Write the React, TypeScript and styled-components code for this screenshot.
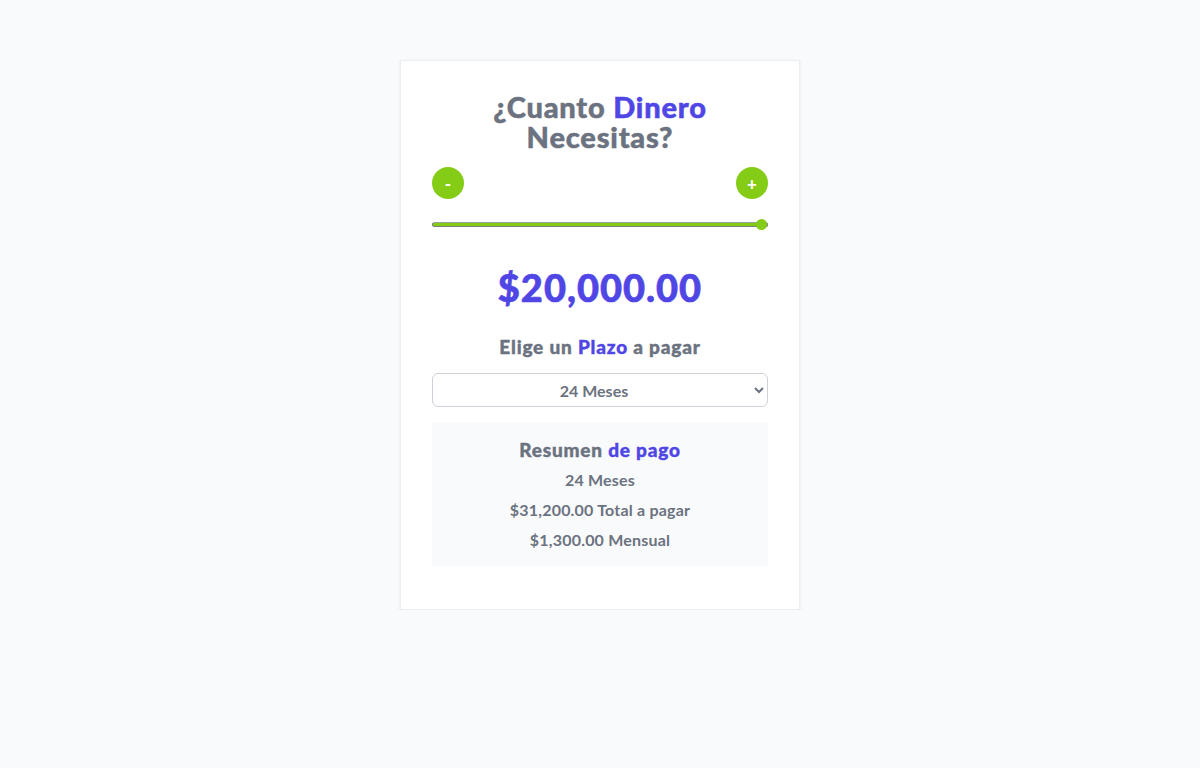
import React, { useState } from "react";
import styled, { createGlobalStyle } from "styled-components";

const Global = createGlobalStyle`
  html, body { margin: 0; padding: 0; }
  body {
    background: #f9fafb;
    font-family: Lato, "Open Sans", sans-serif;
    color: #6b7280;
  }
`;

const Page = styled.div`
  display: flex;
  justify-content: center;
  padding-top: 60px;
`;

const Card = styled.div`
  width: 400px;
  box-sizing: border-box;
  background: #fff;
  padding: 31px 31px 43px;
  border: 1px solid #eceef1;
  box-shadow: 0 1px 3px rgba(0, 0, 0, 0.08);
  display: flex;
  flex-direction: column;
`;

const Title = styled.h1`
  margin: 0;
  text-align: center;
  font-size: 29px;
  line-height: 30px;
  font-weight: 900;
  letter-spacing: 0.8px;
  -webkit-text-stroke: 0.5px currentColor;
  color: #6b7280;
`;

const Accent = styled.span`
  color: #4f46e5;
`;

const ButtonRow = styled.div`
  display: flex;
  justify-content: space-between;
  margin-top: 15px;
`;

const RoundButton = styled.button`
  width: 32px;
  height: 32px;
  border-radius: 50%;
  border: none;
  background: #84cc16;
  color: #fff;
  font-family: Lato, sans-serif;
  font-weight: 900;
  font-size: 17px;
  line-height: 1;
  padding: 0;
  display: flex;
  align-items: center;
  justify-content: center;
  cursor: pointer;
`;

const Range = styled.input`
  -webkit-appearance: none;
  appearance: none;
  width: 100%;
  margin: 20px 0 0;
  height: 11px;
  background: transparent;
  &::-webkit-slider-runnable-track {
    height: 5px;
    background: #84cc16;
    border: 1px solid #7d7d7d;
    border-top-color: #9aa09a;
    border-radius: 4px;
    box-sizing: border-box;
  }
  &::-webkit-slider-thumb {
    -webkit-appearance: none;
    width: 11px;
    height: 11px;
    border-radius: 50%;
    background: #84cc16;
    border: none;
    margin-top: -4px;
  }
`;

const Amount = styled.div`
  margin-top: 37px;
  text-align: center;
  font-size: 38px;
  line-height: 40px;
  font-weight: 900;
  letter-spacing: 1px;
  -webkit-text-stroke: 0.6px currentColor;
  color: #4f46e5;
`;

const Subtitle = styled.h2`
  margin: 26px 0 0;
  text-align: center;
  font-size: 19px;
  line-height: 28px;
  font-weight: 900;
  letter-spacing: 0.8px;
  -webkit-text-stroke: 0.4px currentColor;
  color: #6b7280;
`;

const Select = styled.select`
  margin-top: 12px;
  width: 100%;
  height: 34px;
  border: 1px solid #cfd2d8;
  border-radius: 6px;
  background: #fff;
  font-family: Lato, sans-serif;
  font-weight: 700;
  font-size: 16px;
  color: #6b7280;
  text-align: center;
  text-align-last: center;
  padding: 0 8px;
`;

const Summary = styled.div`
  margin-top: 15px;
  background: #f9fafb;
  padding: 14px 0 12px;
  display: flex;
  flex-direction: column;
  align-items: center;
`;

const SummaryTitle = styled.h3`
  margin: 0;
  font-size: 19px;
  line-height: 28px;
  font-weight: 900;
  letter-spacing: 0.8px;
  -webkit-text-stroke: 0.4px currentColor;
  color: #6b7280;
`;

const SummaryLine = styled.p`
  margin: 2px 0 0;
  font-size: 16px;
  line-height: 28px;
  font-weight: 700;
  letter-spacing: 0.2px;
  color: #6b7280;
`;

export default function App() {
  const [amount, setAmount] = useState(20000);
  const [months, setMonths] = useState(24);
  const fmt = (n: number) =>
    "$" + n.toLocaleString("en-US", { minimumFractionDigits: 2, maximumFractionDigits: 2 });
  const total = months === 24 ? 31200 : months === 12 ? 27000 : 34800;
  const scaled = (total * amount) / 20000;
  return (
    <>
      <Global />
      <Page>
        <Card>
          <Title>
            ¿Cuanto <Accent>Dinero</Accent> Necesitas?
          </Title>
          <ButtonRow>
            <RoundButton onClick={() => setAmount(Math.max(0, amount - 100))}>-</RoundButton>
            <RoundButton onClick={() => setAmount(Math.min(20000, amount + 100))}>+</RoundButton>
          </ButtonRow>
          <Range
            type="range"
            min={0}
            max={20000}
            step={100}
            value={amount}
            onChange={(e) => setAmount(Number(e.target.value))}
          />
          <Amount>{fmt(amount)}</Amount>
          <Subtitle>
            Elige un <Accent>Plazo</Accent> a pagar
          </Subtitle>
          <Select value={months} onChange={(e) => setMonths(Number(e.target.value))}>
            <option value={12}>12 Meses</option>
            <option value={24}>24 Meses</option>
            <option value={36}>36 Meses</option>
          </Select>
          <Summary>
            <SummaryTitle>
              Resumen <Accent>de pago</Accent>
            </SummaryTitle>
            <SummaryLine>{months} Meses</SummaryLine>
            <SummaryLine>{fmt(scaled)} Total a pagar</SummaryLine>
            <SummaryLine>{fmt(scaled / months)} Mensual</SummaryLine>
          </Summary>
        </Card>
      </Page>
    </>
  );
}
